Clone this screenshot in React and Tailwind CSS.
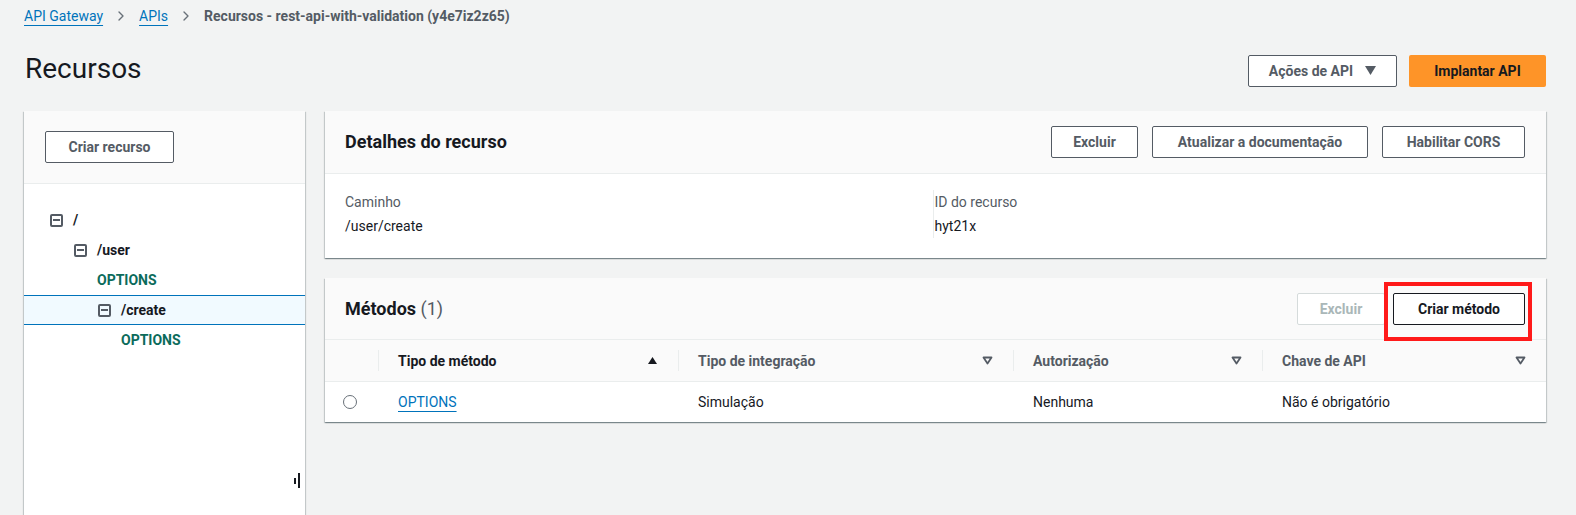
import { ChevronRight } from 'lucide-react';

const font = { fontFamily: 'Roboto, "Open Sans", Arial, sans-serif' };

function Btn({ children, disabled, className = '' }) {
  return (
    <button
      className={`h-8 px-5 rounded-[2px] border text-sm font-bold bg-white whitespace-nowrap ${
        disabled ? 'border-[#d5dbdb] text-[#aab7b8]' : 'border-[#545b64] text-[#545b64]'
      } ${className}`}
    >
      {children}
    </button>
  );
}

function MinusBox() {
  return (
    <span className="w-[13px] h-[13px] border-2 border-[#545b64] rounded-[2px] flex items-center justify-center shrink-0">
      <span className="w-[7px] h-[2px] bg-[#545b64]" />
    </span>
  );
}

function TreeRow({ indent, label, method, selected, box }) {
  return (
    <div
      className={`h-[30px] flex items-center text-sm font-bold ${
        selected ? 'bg-[#f1faff] border-y border-[#0073bb]' : 'border-y border-transparent'
      }`}
      style={{ paddingLeft: indent }}
    >
      {box && <MinusBox />}
      <span className={`${box ? 'ml-[10px]' : ''} ${method ? 'text-[#0b6b5b]' : 'text-[#16191f]'}`}>{label}</span>
    </div>
  );
}

function SortDown() {
  return (
    <svg width="11" height="9" viewBox="0 0 11 9" className="shrink-0">
      <path d="M1.5 1.5h8L5.5 7.5z" fill="none" stroke="#545b64" strokeWidth="1.8" strokeLinejoin="round" />
    </svg>
  );
}

function SortUp() {
  return (
    <svg width="11" height="9" viewBox="0 0 11 9" className="shrink-0">
      <path d="M1 8h9L5.5 1z" fill="#16191f" />
    </svg>
  );
}

const cardShadow =
  'shadow-[0_1px_1px_0_rgba(0,28,36,0.3),1px_1px_1px_0_rgba(0,28,36,0.15),-1px_1px_1px_0_rgba(0,28,36,0.15)]';

function HeadCell({ label, sorted }) {
  return (
    <div className="flex items-center h-full relative">
      <span className="absolute left-0 top-[10px] bottom-[10px] w-px bg-[#eaeded]" />
      <div className="flex-1 flex items-center justify-between pl-5 pr-5">
        <span className={`text-sm font-bold ${sorted ? 'text-[#16191f]' : 'text-[#545b64]'}`}>{label}</span>
        {sorted ? <SortUp /> : <SortDown />}
      </div>
    </div>
  );
}

export default function App() {
  return (
    <div className="w-[1576px] h-[515px] overflow-hidden bg-[#f2f3f3] text-[#16191f]" style={font}>
      <div className="pl-6 pr-[30px]">
        {/* breadcrumb */}
        <div className="h-[31px] flex items-center gap-[10px] text-sm pt-px">
          <span className="text-[#0073bb] underline underline-offset-[4px] decoration-1">API Gateway</span>
          <ChevronRight size={16} strokeWidth={2} className="text-[#687078]" />
          <span className="text-[#0073bb] underline underline-offset-[4px] decoration-1">APIs</span>
          <ChevronRight size={16} strokeWidth={2} className="text-[#687078]" />
          <span className="font-bold text-[#545b64]">Recursos - rest-api-with-validation (y4e7iz2z65)</span>
        </div>

        {/* title row */}
        <div className="h-[80px] flex items-center justify-between">
          <h1 className="text-[28px] leading-none font-normal -mt-[4px] ml-px">Recursos</h1>
          <div className="flex items-center gap-[12px] -mt-[1px]">
            <button className="h-[32px] w-[149px] border border-[#545b64] rounded-[2px] bg-white text-sm font-bold text-[#545b64] flex items-center justify-center gap-[12px]">
              Ações de API
              <svg width="11" height="9" viewBox="0 0 11 9">
                <path d="M0 0h11L5.5 9z" fill="#545b64" />
              </svg>
            </button>
            <button className="h-[32px] w-[137px] rounded-[2px] bg-[#fe9428] text-sm font-bold text-[#16191f]">
              Implantar API
            </button>
          </div>
        </div>

        <div className="flex gap-5">
          {/* left tree panel */}
          <div className={`w-[281px] h-[420px] bg-white shrink-0 relative ${cardShadow}`}>
            <div className="h-[73px] bg-[#fafafa] border-b border-[#eaeded] flex items-center px-[21px]">
              <Btn className="w-[129px] h-[32px] px-0 -mt-[1px]">Criar recurso</Btn>
            </div>
            <div className="pt-[21px]">
              <TreeRow indent={26} label="/" box />
              <TreeRow indent={50} label="/user" box />
              <TreeRow indent={73} label="OPTIONS" method />
              <TreeRow indent={74} label="/create" box selected />
              <TreeRow indent={97} label="OPTIONS" method />
            </div>
            <div className="absolute left-[270px] top-[362px] flex items-center gap-[2px]">
              <span className="w-[2px] h-[6px] bg-[#16191f]" />
              <span className="w-[2px] h-[15px] bg-[#16191f]" />
            </div>
          </div>

          {/* main */}
          <div className="flex-1 flex flex-col gap-[20px]">
            {/* details card */}
            <div className={`bg-white ${cardShadow}`}>
              <div className="h-[63px] bg-[#fafafa] border-b border-[#eaeded] flex items-center justify-between px-5">
                <h2 className="text-lg font-bold">Detalhes do recurso</h2>
                <div className="flex items-center gap-[14px] pr-px">
                  <Btn className="w-[87px] px-0">Excluir</Btn>
                  <Btn className="w-[216px] px-0">Atualizar a documentação</Btn>
                  <Btn className="w-[143px] px-0">Habilitar CORS</Btn>
                </div>
              </div>
              <div className="grid grid-cols-2 h-[84px] text-sm">
                <div className="px-5 pt-[16px] leading-[24px]">
                  <div className="text-[#545b64]">Caminho</div>
                  <div>/user/create</div>
                </div>
                <div className="pt-[16px] leading-[24px] pb-[12px]">
                  <div className="border-l border-[#eaeded] pl-[1px] -ml-[3px]">
                    <div className="text-[#545b64]">ID do recurso</div>
                    <div>hyt21x</div>
                  </div>
                </div>
              </div>
            </div>

            {/* methods card */}
            <div className={`bg-white ${cardShadow}`}>
              <div className="h-[62px] bg-[#fafafa] border-b border-[#eaeded] flex items-center justify-between px-5">
                <h2 className="text-lg font-bold">
                  Métodos <span className="font-normal text-[#545b64]">(1)</span>
                </h2>
                <div className="flex items-center gap-[8px] pr-px">
                  <Btn disabled className="w-[88px] px-0">Excluir</Btn>
                  <div className="relative">
                    <Btn className="w-[132px] px-0 border-[#16191f] text-[#16191f]">Criar método</Btn>
                    <span className="absolute -left-[9px] -top-[11px] -right-[7px] -bottom-[16px] border-[4px] border-[#ff1a1a]" />
                  </div>
                </div>
              </div>
              <div className="grid grid-cols-[53px_300px_335px_249px_1fr] h-[42px] bg-[#fafafa] border-b border-[#eaeded]">
                <div />
                <HeadCell label="Tipo de método" sorted />
                <HeadCell label="Tipo de integração" />
                <HeadCell label="Autorização" />
                <HeadCell label="Chave de API" />
              </div>
              <div className="grid grid-cols-[53px_300px_335px_249px_1fr] h-[40px] items-center text-sm">
                <div className="flex justify-end pr-[21px]">
                  <span className="w-[14px] h-[14px] rounded-full border border-[#687078]" />
                </div>
                <div className="pl-5">
                  <span className="text-[#0073bb] underline underline-offset-[4px] decoration-1">OPTIONS</span>
                </div>
                <div className="pl-5">Simulação</div>
                <div className="pl-5">Nenhuma</div>
                <div className="pl-5">Não é obrigatório</div>
              </div>
            </div>
          </div>
        </div>
      </div>
    </div>
  );
}
